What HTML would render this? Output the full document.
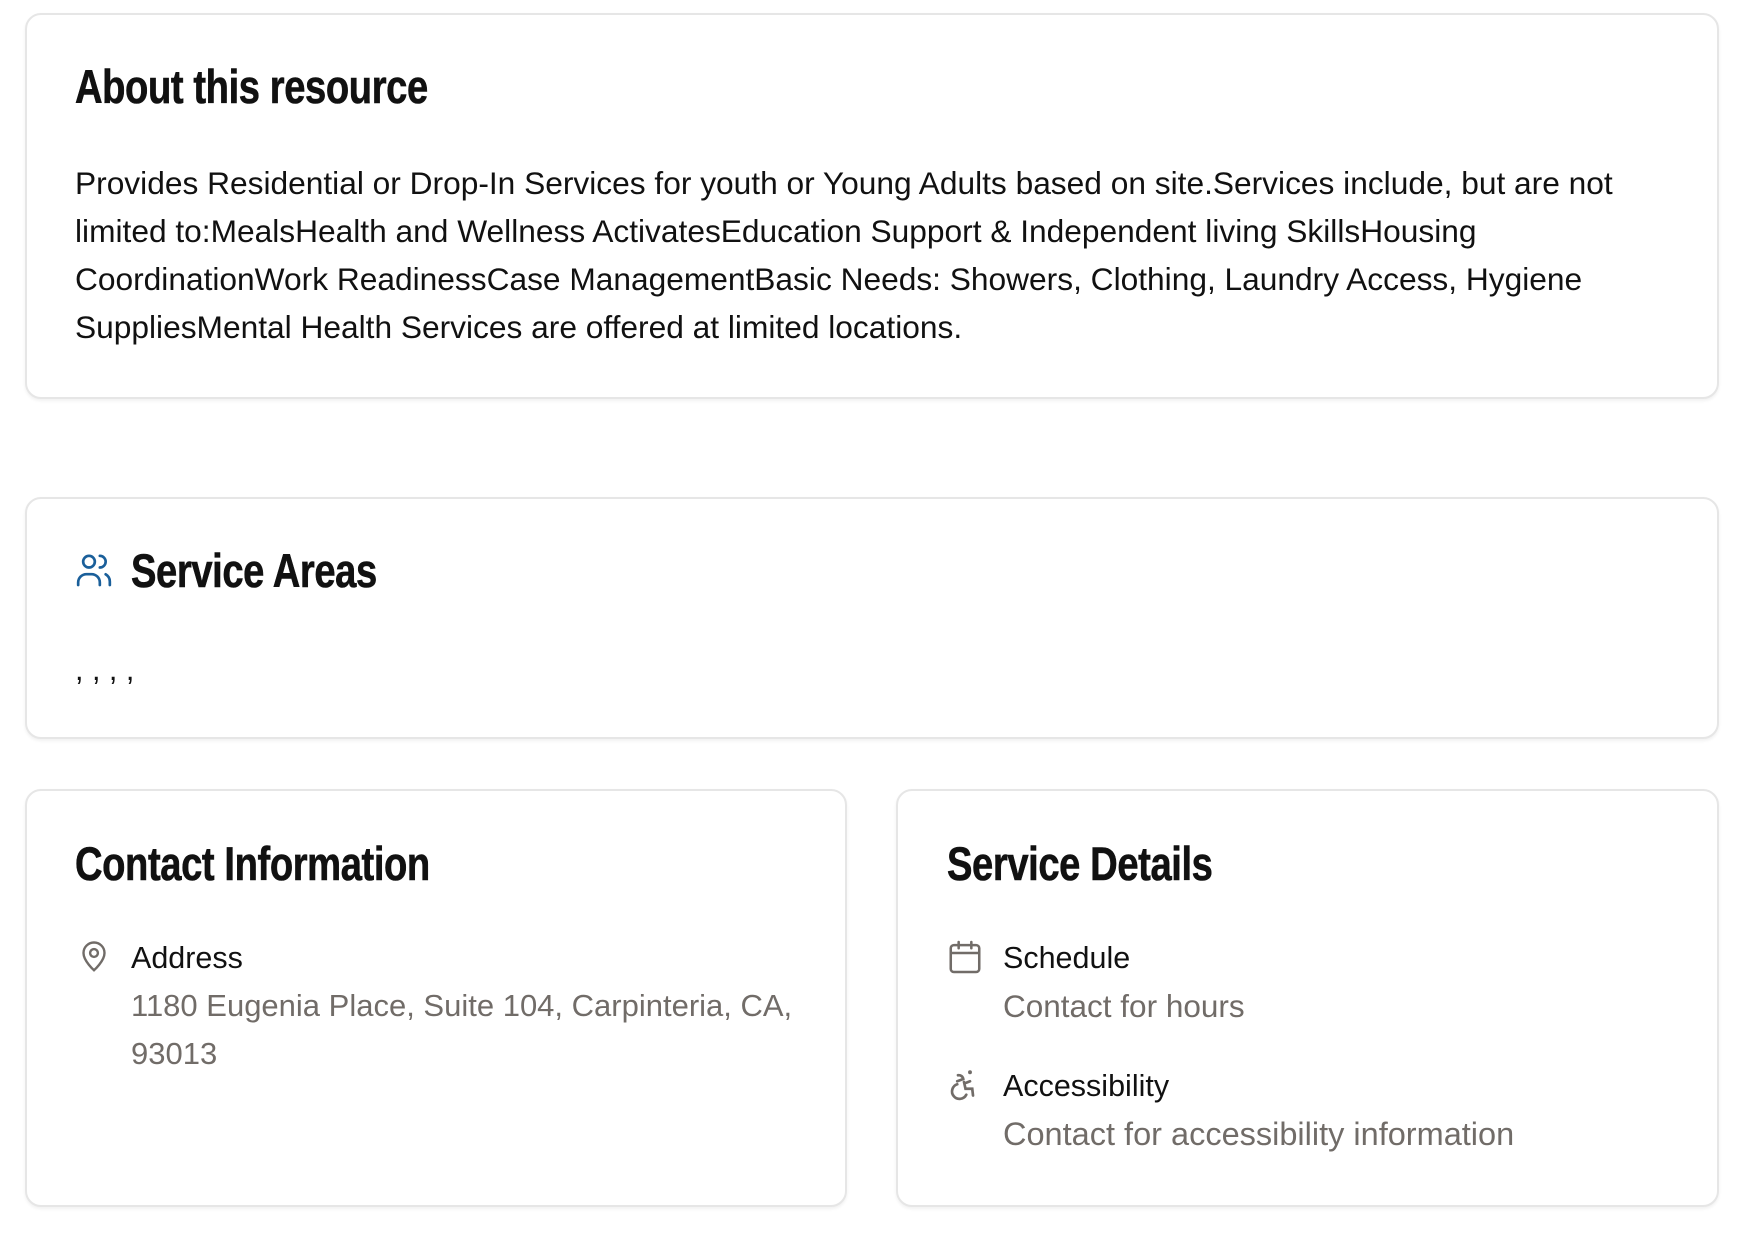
<!DOCTYPE html>
<html><head><meta charset="utf-8"><style>
body{margin:0;width:1752px;height:1248px;background:#fff;font-family:"Liberation Sans",sans-serif;color:#111;position:relative;overflow:hidden}
.card{position:absolute;border:2px solid #e6e6e6;border-radius:16px;box-shadow:0 2px 3px rgba(0,0,0,.06);box-sizing:border-box;background:#fff}
.h{position:absolute;font-weight:bold;font-size:47px;letter-spacing:-0.5px;line-height:1;white-space:nowrap;transform:scaleX(0.812);transform-origin:0 0;-webkit-text-stroke:0.6px #111}
.t{position:absolute;font-size:30.5px;line-height:48px;white-space:nowrap}
.g{color:#716c68;font-size:31.5px}
.b{font-size:31.7px}
svg{position:absolute}
</style></head><body>
<div class="card" style="left:25px;top:13px;width:1694px;height:386px"></div>
<div class="h" style="left:75px;top:63px">About this resource</div>
<div class="t b" style="left:75px;top:159px">Provides Residential or Drop-In Services for youth or Young Adults based on site.Services include, but are not</div>
<div class="t b" style="left:75px;top:207px">limited to:MealsHealth and Wellness ActivatesEducation Support &amp; Independent living SkillsHousing</div>
<div class="t b" style="left:75px;top:255px">CoordinationWork ReadinessCase ManagementBasic Needs: Showers, Clothing, Laundry Access, Hygiene</div>
<div class="t b" style="left:75px;top:303px">SuppliesMental Health Services are offered at limited locations.</div>

<div class="card" style="left:25px;top:497px;width:1694px;height:242px"></div>
<svg style="left:74px;top:550px" width="40" height="40" viewBox="0 0 24 24" fill="none" stroke="#1a5f9a" stroke-width="1.6" stroke-linecap="round"><circle cx="9" cy="7" r="3.5"/><path d="M2.5 21v-1.5a5 5 0 0 1 5-5h3a5 5 0 0 1 5 5V21"/><path d="M15.5 3.5a3.5 3.5 0 0 1 0 7"/><path d="M19 14.6a5 5 0 0 1 2.5 4.4V21"/></svg>
<div class="h" style="left:131px;top:547px">Service Areas</div>
<div class="t" style="left:75px;top:646px">, , , ,</div>

<div class="card" style="left:25px;top:789px;width:822px;height:418px"></div>
<div class="h" style="left:75px;top:840px">Contact Information</div>
<svg style="left:76px;top:938px" width="36" height="36" viewBox="0 0 24 24" fill="none" stroke="#716c68" stroke-width="1.6"><path d="M12 21.5s-7-6.2-7-11.5a7 7 0 0 1 14 0c0 5.3-7 11.5-7 11.5z"/><circle cx="12" cy="10" r="2.6"/></svg>
<div class="t" style="left:131px;top:934px">Address</div>
<div class="t g" style="left:131px;top:982px;font-size:31px">1180 Eugenia Place, Suite 104, Carpinteria, CA,</div>
<div class="t g" style="left:131px;top:1030px;font-size:31px">93013</div>

<div class="card" style="left:896px;top:789px;width:823px;height:418px"></div>
<div class="h" style="left:947px;top:840px">Service Details</div>
<svg style="left:946px;top:938px" width="38" height="38" viewBox="0 0 24 24" fill="none" stroke="#716c68" stroke-width="1.6" stroke-linecap="round"><rect x="3" y="4.5" width="18" height="17" rx="2"/><path d="M3 9.5h18M8 2.5v4M16 2.5v4"/></svg>
<div class="t" style="left:1003px;top:934px">Schedule</div>
<div class="t g" style="left:1003px;top:982px">Contact for hours</div>
<svg style="left:946px;top:1067px" width="36" height="36" viewBox="0 0 24 24" fill="none" stroke="#716c68" stroke-width="1.8" stroke-linecap="round"><circle cx="16" cy="3.5" r="1.3" fill="#716c68" stroke="none"/><path d="M8 5.5a3 3 0 0 1 3.5 2.5l-4 1.5M12 10l1 4.5h4.5l.5 4.5M16 9.5l-2.5 1"/><path d="M7.5 11.5a5 5 0 1 0 6 7"/></svg>
<div class="t" style="left:1003px;top:1062px">Accessibility</div>
<div class="t g" style="left:1003px;top:1110px;font-size:32.5px">Contact for accessibility information</div>
</body></html>
